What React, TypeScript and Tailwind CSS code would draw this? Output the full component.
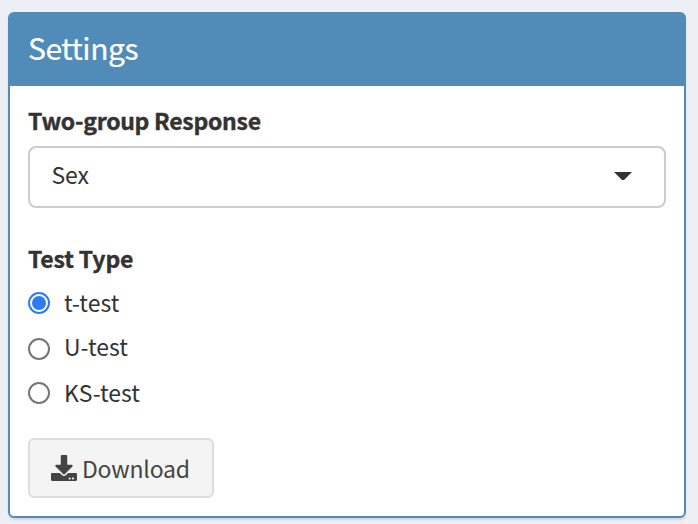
import { FaDownload } from "react-icons/fa";

const tests = [
  { label: "t-test", row: "h-[22px]", text: "mb-[2px]", checked: true },
  { label: "U-test", row: "mt-6 h-[22px]", text: "mb-1.5", checked: false },
  { label: "KS-test", row: "mt-[22px] h-[22px]", text: "mb-[2px]", checked: false },
];

function Radio({ checked }: { checked: boolean }) {
  return (
    <span
      className={
        checked
          ? "flex size-[22px] items-center justify-center rounded-full border-2 border-[#2f7bf6]"
          : "flex size-[22px] rounded-full border-2 border-[#767676]"
      }
    >
      {checked && <span className="size-[14px] rounded-full bg-[#2f7bf6]" />}
    </span>
  );
}

export default function App() {
  return (
    <main className="h-[524px] w-[698px] overflow-hidden bg-[#ecf0f5] pt-3 pl-2 font-['Noto_Sans_CJK_SC','Noto_Sans',sans-serif] text-[23px] leading-[30px] text-[#333]">
      <section className="h-[506px] w-[678px] rounded-[6px] border-2 border-[#518cb8] bg-white shadow-[0_2px_2px_rgba(0,0,0,0.1)]">
        <header className="h-[72px] bg-[#518cb8] px-[18px] pt-[13px] text-[30px] leading-10 tracking-[-0.45px] text-white [-webkit-text-stroke:0.2px_#fff]">
          Settings
        </header>
        <div className="px-[18px] pt-[19px]">
          <div className="font-bold tracking-[-0.28px] [-webkit-text-stroke:0.4px_#333]">
            Two-group Response
          </div>
          <div className="mt-[11px] flex h-[62px] items-center justify-between rounded-[8px] border-2 border-[#ccc] pr-8 pl-[22px]">
            <span className="-mt-1.5 -ml-[0.5px] tracking-[-0.15px]">Sex</span>
            <svg className="-mt-[2px] h-2 w-[18px]" viewBox="0 0 18 8">
              <path d="M0 0h18L10 8H8z" fill="#333" />
            </svg>
          </div>
          <div className="mt-[35px] font-bold tracking-[-0.15px] [-webkit-text-stroke:0.4px_#333]">
            Test Type
          </div>
          <div className="mt-[19px]">
            {tests.map((t) => (
              <label key={t.label} className={`flex items-center gap-[14px] ${t.row}`}>
                <Radio checked={t.checked} />
                <span className={t.text}>{t.label}</span>
              </label>
            ))}
          </div>
          <button className="mt-[34px] flex h-[60px] w-[186px] items-center rounded-[6px] border-2 border-[#ddd] bg-[#f4f4f4] pl-[21px] text-[#444]">
            <FaDownload className="size-[26px]" />
            <span className="ml-[5px] tracking-[-0.2px]">Download</span>
          </button>
        </div>
      </section>
    </main>
  );
}
